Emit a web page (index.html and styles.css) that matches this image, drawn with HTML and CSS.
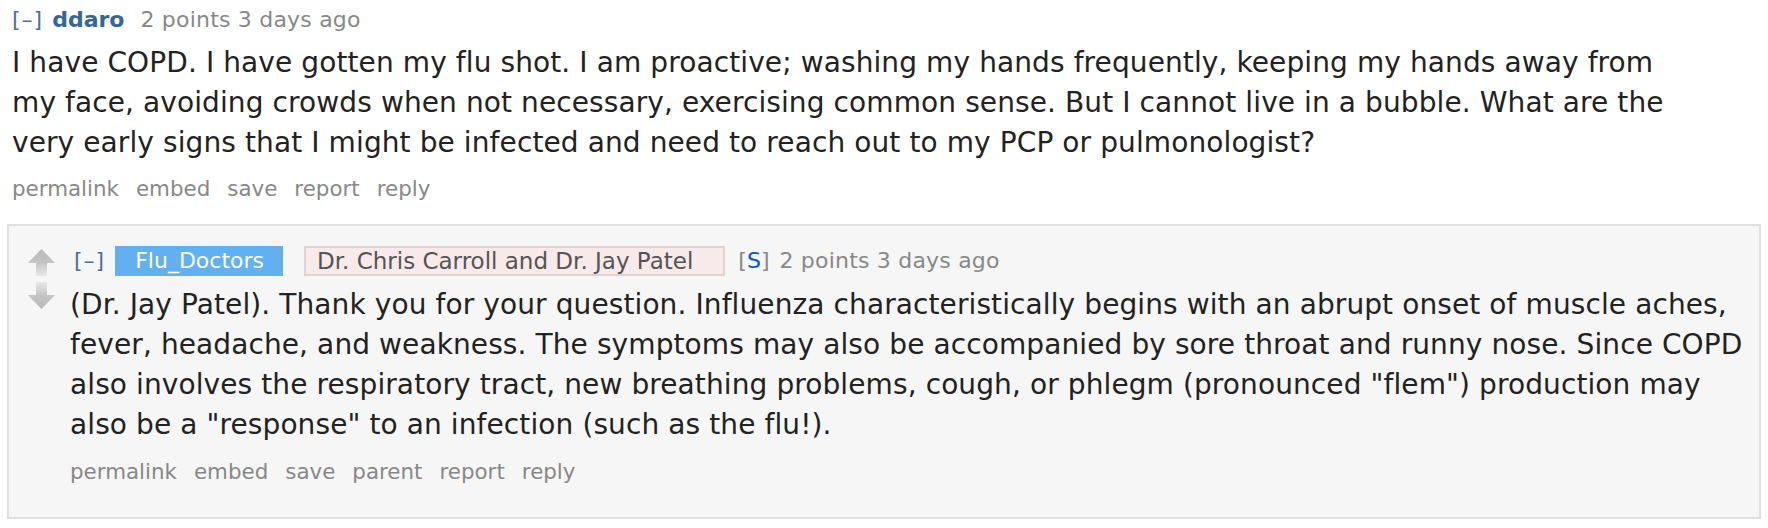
FILE: index.html
```html
<!DOCTYPE html>
<html lang="en">
<head>
<meta charset="utf-8">
<title>Comment thread</title>
<link rel="stylesheet" href="styles.css">
</head>
<body>
<div class="thread">
  <div class="comment top">
    <div class="entry">
      <p class="tagline">
        <a class="expand">[–]</a>
        <a class="author">ddaro</a>
        <span class="meta">2 points 3 days ago</span>
      </p>
      <div class="md">
        <p>I have COPD. I have gotten my flu shot. I am proactive; washing my hands frequently, keeping my hands away from my face, avoiding crowds when not necessary, exercising common sense. But I cannot live in a bubble. What are the very early signs that I might be infected and need to reach out to my PCP or pulmonologist?</p>
      </div>
      <ul class="buttons">
        <li>permalink</li>
        <li>embed</li>
        <li>save</li>
        <li>report</li>
        <li>reply</li>
      </ul>
    </div>

    <div class="child">
      <div class="comment nested">
        <div class="midcol">
          <svg class="arrow" width="29" height="28" viewBox="0 0 29 28" aria-hidden="true">
            <defs>
              <linearGradient id="gup" x1="0" y1="0" x2="0" y2="1">
                <stop offset="0" stop-color="#b9b9b9"/>
                <stop offset="0.5" stop-color="#c4c4c4"/>
                <stop offset="1" stop-color="#e8e8e8"/>
              </linearGradient>
            </defs>
            <path d="M14.5 1 L28 15 L20 15 L20 28 L9 28 L9 15 L1 15 Z" fill="url(#gup)"/>
          </svg>
          <svg class="arrow" width="29" height="28" viewBox="0 0 29 28" aria-hidden="true">
            <defs>
              <linearGradient id="gdown" x1="0" y1="0" x2="0" y2="1">
                <stop offset="0" stop-color="#e8e8e8"/>
                <stop offset="0.5" stop-color="#c4c4c4"/>
                <stop offset="1" stop-color="#b9b9b9"/>
              </linearGradient>
            </defs>
            <path d="M9 0 L20 0 L20 13 L28 13 L14.5 27 L1 13 L9 13 Z" fill="url(#gdown)"/>
          </svg>
        </div>
        <div class="entry">
          <p class="tagline">
            <a class="expand">[–]</a>
            <a class="author submitter">Flu_Doctors</a>
            <span class="flair">Dr. Chris Carroll and Dr. Jay Patel</span>
            <span class="tag">[<span class="s">S</span>]</span>
            <span class="meta">2 points 3 days ago</span>
          </p>
          <div class="md">
            <p>(Dr. Jay Patel). Thank you for your question. Influenza characteristically begins with an abrupt onset of muscle aches, fever, headache, and weakness. The symptoms may also be accompanied by sore throat and runny nose. Since COPD also involves the respiratory tract, new breathing problems, cough, or phlegm (pronounced "flem") production may also be a "response" to an infection (such as the flu!).</p>
          </div>
          <ul class="buttons">
            <li>permalink</li>
            <li>embed</li>
            <li>save</li>
            <li>parent</li>
            <li>report</li>
            <li>reply</li>
          </ul>
        </div>
      </div>
    </div>
  </div>
</div>
</body>
</html>
```

FILE: styles.css
```css
html, body {
  margin: 0;
  padding: 0;
  background: #ffffff;
}

body {
  font-family: "DejaVu Sans", Verdana, sans-serif;
  color: #222222;
}

.thread {
  padding: 5px 7px 0 7px;
}

.top > .entry {
  padding-left: 5px;
}

.tagline {
  margin: 0;
  display: flex;
  align-items: center;
  height: 30px;
  font-size: 22px;
  line-height: 30px;
  color: #888888;
  white-space: nowrap;
}

.expand {
  color: #4d6f98;
  letter-spacing: 1px;
  margin-right: 9px;
}

.author {
  color: #336699;
  font-weight: bold;
  margin-right: 16px;
}

.meta {
  letter-spacing: 0.2px;
}

.md {
  max-width: 1690px;
  margin-top: 8px;
  font-size: 28px;
  line-height: 40px;
  letter-spacing: 0.1px;
}

.md p {
  margin: 0;
}

.buttons {
  list-style: none;
  margin: 11px 0 0 0;
  padding: 0;
  display: flex;
  gap: 17px;
  font-size: 21.4px;
  line-height: 30px;
  color: #888888;
}

.child {
  margin-top: 20px;
  background: #f6f6f6;
  border: 2px solid #e0e0e0;
  padding: 20px 0 30px 0;
}

.nested {
  display: flex;
  align-items: flex-start;
}

.midcol {
  width: 29px;
  margin-left: 18px;
  margin-right: 14px;
  padding-top: 2px;
  display: flex;
  flex-direction: column;
  gap: 6px;
}

.arrow {
  display: block;
}

.nested > .entry {
  flex: 1;
  min-width: 0;
}

.nested .expand {
  margin-left: 4px;
  margin-right: 10px;
}

.submitter {
  background: #62b0ef;
  color: #ffffff;
  font-weight: normal;
  height: 30px;
  padding: 0 19px 0 20px;
  margin-right: 21px;
  box-sizing: border-box;
}

.flair {
  color: #545454;
  background: #f8eaea;
  border: 2px solid #e3d2d2;
  font-size: 23px;
  height: 30px;
  line-height: 26px;
  padding: 0 30px 0 11px;
  box-sizing: border-box;
  margin-right: 13px;
}

.tag {
  color: #888888;
  margin-right: 10px;
}

.tag .s {
  color: #0055df;
}

.nested .md {
  margin-top: 9px;
}

.nested .buttons {
  margin-top: 12px;
}
```
